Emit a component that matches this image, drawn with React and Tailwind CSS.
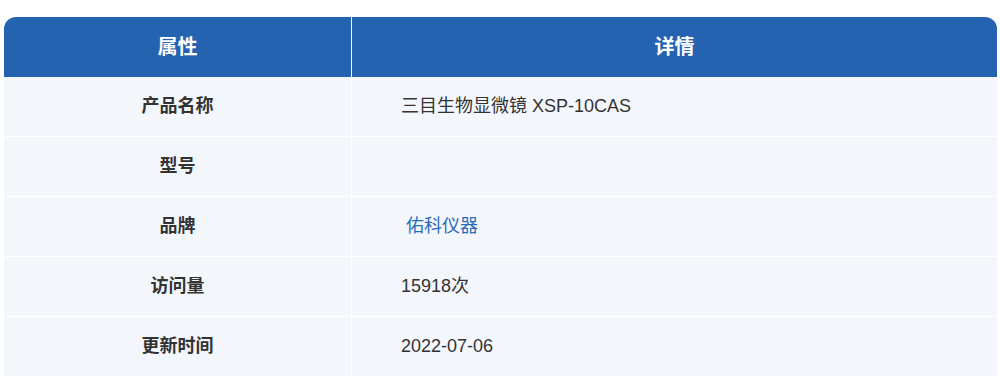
const rows = [
  { label: "产品名称", value: "三目生物显微镜 XSP-10CAS" },
  { label: "型号", value: "" },
  { label: "品牌", value: "佑科仪器", link: true },
  { label: "访问量", value: "15918次" },
  { label: "更新时间", value: "2022-07-06" },
];

export default function App() {
  return (
    <div
      className="bg-white w-[1000px] h-[381px] pt-[17px] pl-[4px] pr-[3px]"
      style={{ fontFamily: '"Liberation Sans", Arial, "Noto Sans CJK SC", sans-serif' }}
    >
      <div className="rounded-t-[12px] overflow-hidden">
        {/* 表头 */}
        <div className="grid grid-cols-[348px_1fr] h-[60px] bg-[#2463b0] text-white text-[20px] font-bold">
          <div className="flex items-center justify-center border-r border-white">属性</div>
          <div className="flex items-center justify-center">详情</div>
        </div>

        {/* 内容行 */}
        {rows.map((row) => (
          <div
            key={row.label}
            className="grid grid-cols-[348px_1fr] h-[60px] bg-[#f3f7fc] border-b border-white text-[18px] text-[#333]"
          >
            <div className="flex items-center justify-center border-r border-white font-bold">
              {row.label}
            </div>
            <div className="flex items-center pl-[49px]">
              {row.link ? (
                <a href="#" className="ml-[5px] text-[#2b6cb8]">
                  {row.value}
                </a>
              ) : (
                row.value
              )}
            </div>
          </div>
        ))}
      </div>
    </div>
  );
}
